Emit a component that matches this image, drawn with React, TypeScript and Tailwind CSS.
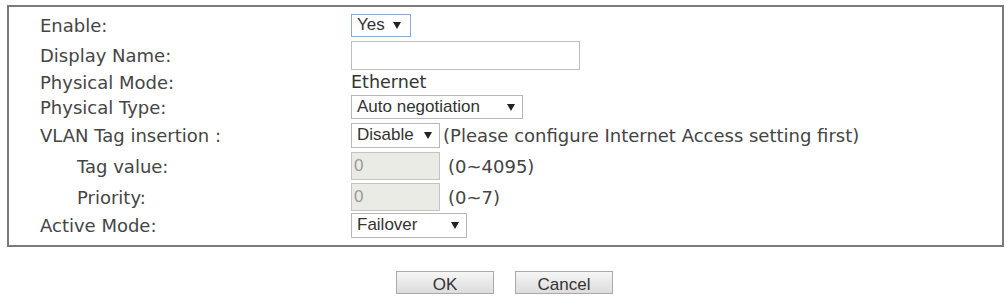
import React from 'react';

const label = "text-[18px] text-[#454545]";
const sans = { fontFamily: '"Liberation Sans", Arial, sans-serif' };

const Arrow = () => (
  <svg width="8" height="7" viewBox="0 0 8 7" className="shrink-0">
    <path d="M0 0 L8 0 L4 7 Z" fill="#222" />
  </svg>
);

const FakeSelect = ({
  value,
  width,
  height = 24,
  focused = false,
  arrowPad = 'justify-between',
}: {
  value: string;
  width: number;
  height?: number;
  focused?: boolean;
  arrowPad?: string;
}) => (
  <div
    className={`flex items-center ${arrowPad} bg-white border pl-[5px] pr-[7px] text-[17px] text-[#333] ${
      focused ? 'border-[#8ea6d2]' : 'border-[#b8b8b8]'
    }`}
    style={{ ...sans, width, height }}
  >
    <span>{value}</span>
    <Arrow />
  </div>
);

const Row = ({
  h,
  indent = false,
  name,
  children,
}: {
  h: number;
  indent?: boolean;
  name: string;
  children: React.ReactNode;
}) => (
  <div className="flex items-center" style={{ height: h }}>
    <div className={`w-[311px] shrink-0 ${indent ? 'pl-[37px]' : ''} ${label}`}>{name}</div>
    <div className="flex items-center">{children}</div>
  </div>
);

export default function App() {
  return (
    <div
      className="w-[1007px] h-[301px] bg-white pt-[5px]"
      style={{ fontFamily: '"DejaVu Sans", Verdana, sans-serif' }}
    >
      <div className="ml-[7px] w-[997px] border-2 border-[#7a7a7a] pl-[31px] pt-[3px] pb-[7px]">
        <Row h={30} name="Enable:">
          <FakeSelect value="Yes" width={60} height={23} focused arrowPad="gap-[8px]" />
        </Row>
        <Row h={30} name="Display Name:">
          <div className="w-[229px] h-[29px] border border-[#bdbdbd] bg-white" />
        </Row>
        <Row h={24} name="Physical Mode:">
          <span className="text-[17.5px] text-[#333]">Ethernet</span>
        </Row>
        <Row h={26} name="Physical Type:">
          <FakeSelect value="Auto negotiation" width={172} />
        </Row>
        <Row h={30} name="VLAN Tag insertion :">
          <FakeSelect value="Disable" width={89} height={25} />
          <span className="ml-[3px] text-[18px] text-[#444]">
            (Please configure Internet Access setting first)
          </span>
        </Row>
        <Row h={32} indent name="Tag value:">
          <div
            className="w-[89px] h-[28px] border border-[#c4c4c4] bg-[#ebebe6] pl-[2px] flex items-center text-[17px] text-[#9a9a9a]"
            style={sans}
          >
            0
          </div>
          <span className="ml-[8px] text-[18px] text-[#444]">(0~4095)</span>
        </Row>
        <Row h={30} indent name="Priority:">
          <div
            className="w-[89px] h-[28px] border border-[#c4c4c4] bg-[#ebebe6] pl-[2px] flex items-center text-[17px] text-[#9a9a9a]"
            style={sans}
          >
            0
          </div>
          <span className="ml-[8px] text-[18px] text-[#444]">(0~7)</span>
        </Row>
        <Row h={26} name="Active Mode:">
          <FakeSelect value="Failover" width={116} height={25} />
        </Row>
      </div>

      <div className="flex justify-center gap-[21px] mt-[24px] pl-[2px]" style={sans}>
        <button className="w-[98px] h-[23px] border border-[#a9a9a9] bg-gradient-to-b from-[#f6f6f6] to-[#dcdcdc] text-[17px] text-[#333]">
          OK
        </button>
        <button className="w-[98px] h-[23px] border border-[#a9a9a9] bg-gradient-to-b from-[#f6f6f6] to-[#dcdcdc] text-[17px] text-[#333]">
          Cancel
        </button>
      </div>
    </div>
  );
}
